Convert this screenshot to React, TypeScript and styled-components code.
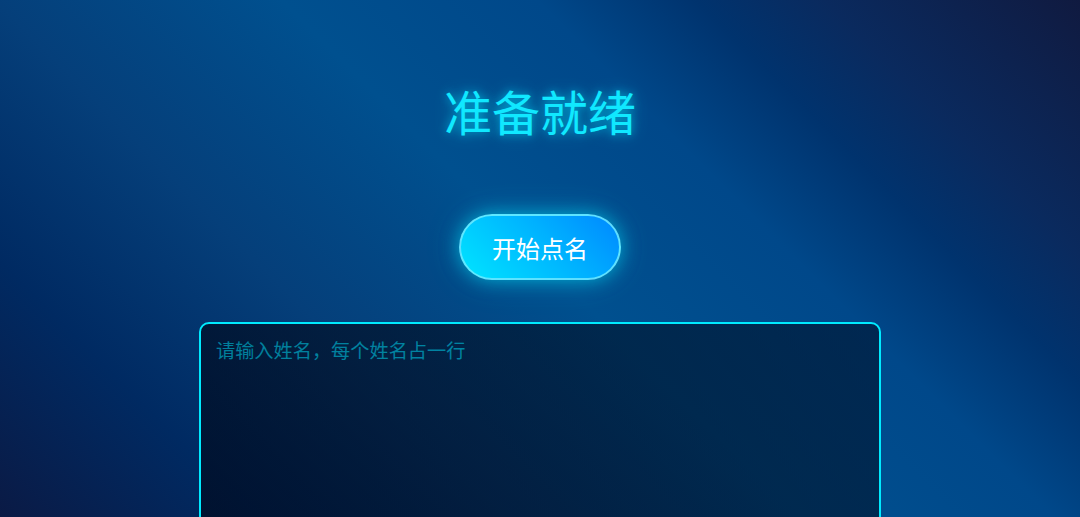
import React from "react";
import styled, { createGlobalStyle } from "styled-components";

const GlobalStyle = createGlobalStyle`
  html, body {
    margin: 0;
    padding: 0;
    height: 100%;
  }
  body {
    min-height: 100vh;
    font-family: "Noto Sans CJK SC", "Noto Sans", sans-serif;
    background: linear-gradient(
      45deg,
      #0a1a45 0%,
      #002a62 16%,
      #053f7a 32%,
      #00508f 50%,
      #00488a 66%,
      #00336e 76%,
      #0a2a5e 84%,
      #101a40 100%
    );
    background-attachment: fixed;
    overflow: hidden;
  }
`;

const Page = styled.main`
  min-height: 100vh;
  display: flex;
  flex-direction: column;
  align-items: center;
  padding-top: 75px;
  box-sizing: border-box;
`;

const Title = styled.h1`
  margin: 0;
  font-size: 48px;
  font-weight: 400;
  line-height: 70px;
  color: #10e8ff;
  text-shadow: 0 0 10px rgba(0, 229, 255, 0.6), 0 0 20px rgba(0, 229, 255, 0.3);
`;

const StartButton = styled.button`
  margin-top: 69px;
  height: 66px;
  padding: 0 31px;
  border-radius: 33px;
  border: 2px solid rgba(110, 235, 255, 0.85);
  background: linear-gradient(45deg, #00e5ff 0%, #00b4ff 55%, #0088ff 100%);
  color: #ffffff;
  font-family: "Noto Sans CJK SC", "Noto Sans", sans-serif;
  font-size: 24px;
  font-weight: 400;
  cursor: pointer;
  box-shadow: 0 0 18px rgba(0, 229, 255, 0.55), 0 0 36px rgba(0, 229, 255, 0.2);
  box-sizing: border-box;
`;

const NameInput = styled.textarea`
  margin-top: 42px;
  width: 682px;
  height: 260px;
  box-sizing: border-box;
  padding: 14px 15px;
  border: 2px solid #00eaff;
  border-radius: 10px;
  background: linear-gradient(
    60deg,
    rgba(0, 5, 20, 0.62) 0%,
    rgba(0, 8, 25, 0.5) 100%
  );
  color: #00e5ff;
  font-family: "Noto Sans CJK SC", "Noto Sans", sans-serif;
  font-size: 19.2px;
  line-height: 1.3;
  resize: none;
  outline: none;

  &::placeholder {
    color: rgba(0, 229, 255, 0.5);
  }
`;

export default function App() {
  return (
    <>
      <GlobalStyle />
      <Page>
        <Title>准备就绪</Title>
        <StartButton>开始点名</StartButton>
        <NameInput placeholder="请输入姓名，每个姓名占一行" />
      </Page>
    </>
  );
}
